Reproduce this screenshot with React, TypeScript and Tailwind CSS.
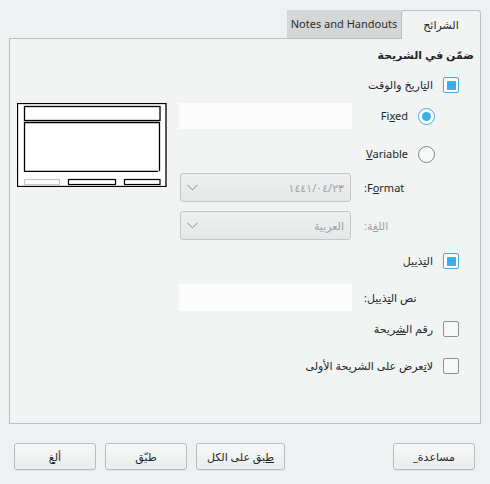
import type { ReactNode } from "react";

function CheckBox({ checked }: { checked?: boolean }) {
  if (checked) {
    return (
      <span className="flex h-4 w-4 shrink-0 items-center justify-center rounded-[2px] border-[1.5px] border-[#3daee9] bg-[#fcfcfc]">
        <span className="h-[9px] w-[9px] rounded-[1px] bg-[#3daee9]" />
      </span>
    );
  }
  return <span className="block h-4 w-4 shrink-0 rounded-[2px] border border-[#8e9193] bg-[#f7f8f8]" />;
}

function Radio({ checked }: { checked?: boolean }) {
  if (checked) {
    return (
      <span className="flex h-[17px] w-[17px] shrink-0 items-center justify-center rounded-full border-[1.5px] border-[#3daee9] bg-[#fcfcfc]">
        <span className="h-[9px] w-[9px] rounded-full bg-[#3daee9]" />
      </span>
    );
  }
  return <span className="block h-[17px] w-[17px] shrink-0 rounded-full border border-[#7f8284] bg-[#f7f8f8]" />;
}

function Chevron() {
  return (
    <svg width="11" height="7" viewBox="0 0 11 7" className="block shrink-0">
      <path d="M0.5 0.8 L5.5 5.8 L10.5 0.8" fill="none" stroke="#a3a6a8" strokeWidth="1.1" />
    </svg>
  );
}

function Combo({ value }: { value: string }) {
  return (
    <div className="ml-px mr-auto flex h-[29px] w-[171px] items-center justify-between rounded-[3px] border border-[#c3c5c7] bg-gradient-to-b from-[#eeefef] to-[#e6e7e8] pl-[6px] pr-[6px] text-[#a0a3a5]">
      <span>{value}</span>
      <Chevron />
    </div>
  );
}

function CheckRow({ checked, className, children }: { checked?: boolean; className: string; children: ReactNode }) {
  return (
    <div className={`flex h-4 items-center ${className}`}>
      <CheckBox checked={checked} />
      <span className="mr-[10px] whitespace-nowrap">{children}</span>
    </div>
  );
}

function Button({ className = "w-[82px]", children }: { className?: string; children: ReactNode }) {
  return (
    <div
      className={`flex h-[27px] items-center justify-center rounded-[3px] border border-[#b9bbbd] bg-gradient-to-b from-[#f6f7f7] to-[#ebecec] shadow-[0_1px_0_rgba(0,0,0,0.05)] ${className}`}
    >
      {children}
    </div>
  );
}

function SlidePreview() {
  return (
    <svg width="150" height="84" viewBox="0 0 150 84" className="block">
      <rect x="0.5" y="0.5" width="148.5" height="83" fill="#ffffff" stroke="#000" strokeWidth="1.3" />
      <rect x="7.5" y="3.5" width="135.5" height="14" fill="none" stroke="#000" strokeWidth="1.3" />
      <path d="M142.5 68.3 V19.5 H7.5 V68.3 H141" fill="none" stroke="#000" strokeWidth="1.3" />
      <rect x="7.5" y="76.5" width="35" height="5" fill="none" stroke="#c8c8c8" strokeWidth="1.2" />
      <rect x="51.5" y="76.5" width="47" height="5" fill="none" stroke="#000" strokeWidth="1.2" />
      <rect x="107.5" y="76.5" width="35.5" height="5" fill="none" stroke="#000" strokeWidth="1.2" />
    </svg>
  );
}

export default function App() {
  return (
    <div className="h-[484px] w-[490px] bg-[#eff0f1] pt-[10px] font-['Noto_Sans','DejaVu_Sans',sans-serif] text-[11px] leading-4 text-[#232629]">
      {/* tabs */}
      <div className="flex justify-end pr-[9px]">
        <div className="flex h-[28px] w-[114px] items-center justify-center bg-[#d5d6d6] text-[#2a2e32]">
          Notes and Handouts
        </div>
        <div
          dir="rtl"
          className="relative z-10 -mb-px flex h-[29px] w-[80px] items-center justify-center rounded-t-[3px] border border-b-0 border-[#bcbebf] bg-[#f2f3f3]"
        >
          الشرائح
        </div>
      </div>

      {/* page */}
      <div className="mx-[9px] flex h-[386px] flex-col border border-[#bcbebf] bg-[#f2f3f3]">
        <div dir="rtl" className="pr-[6px] pt-[8px] font-bold">
          ضمّن في الشريحة
        </div>

        <div className="flex pl-[7px]">
          <div className="mt-[40px] shrink-0">
            <SlidePreview />
          </div>

          <div dir="rtl" className="ml-[12px] flex flex-1 flex-col pr-[21px]">
            <CheckRow checked className="mt-[14px]">
              ال<span className="underline">ت</span>اريخ والوقت
            </CheckRow>

            <div className="mt-[10px] flex h-[26px] items-center">
              <span className="mr-[24px]">
                <Radio checked />
              </span>
              <span dir="ltr" className="mr-[10px]">
                Fi<span className="underline">x</span>ed
              </span>
              <div className="mr-auto h-[26px] w-[173px] bg-[#fcfcfc]" />
            </div>

            <div className="mt-[17px] flex h-4 items-center">
              <span className="mr-[24px]">
                <Radio />
              </span>
              <span dir="ltr" className="mr-[10px]">
                <span className="underline">V</span>ariable
              </span>
            </div>

            <div className="mt-[11px] flex h-[29px] items-center">
              <span className="w-[95px] shrink-0 text-left">
                F<span className="underline">o</span>rmat:
              </span>
              <Combo value="١٤٤١/٠٤/٢٣" />
            </div>

            <div className="mt-[9px] flex h-[29px] items-center">
              <span className="w-[95px] shrink-0 text-left text-[#a0a3a5]">
                الل<span className="underline">غ</span>ة:
              </span>
              <Combo value="العربية" />
            </div>

            <CheckRow checked className="mt-[13px]">
              ال<span className="underline">ت</span>ذييل
            </CheckRow>

            <div className="mt-[15px] flex h-[27px] items-center">
              <span className="w-[95px] shrink-0 text-left">
                نص ال<span className="underline">ت</span>ذييل:
              </span>
              <div className="mr-auto h-[27px] w-[173px] bg-[#fcfcfc]" />
            </div>

            <CheckRow className="mt-[10px]">
              رقم ال<span className="underline">ش</span>ريحة
            </CheckRow>

            <CheckRow className="mt-[21px]">
              لا<span className="underline">ت</span>عرض على الشريحة الأولى
            </CheckRow>
          </div>
        </div>
      </div>

      {/* buttons */}
      <div dir="rtl" className="mt-[19px] flex pl-[14px] pr-[15px]">
        <Button>
          <span dir="ltr" className="flex items-baseline">
            <span>_</span>
            <span dir="rtl">مساعدة</span>
          </span>
        </Button>
        <div className="mr-auto flex gap-[9px]">
          <Button className="w-[89px]">
            <span>
              <span className="underline">ط</span>بق على الكل
            </span>
          </Button>
          <Button>
            <span>
              ط<span className="underline">بّ</span>ق
            </span>
          </Button>
          <Button>
            <span>
              أل<span className="underline">غ</span>
            </span>
          </Button>
        </div>
      </div>
    </div>
  );
}
